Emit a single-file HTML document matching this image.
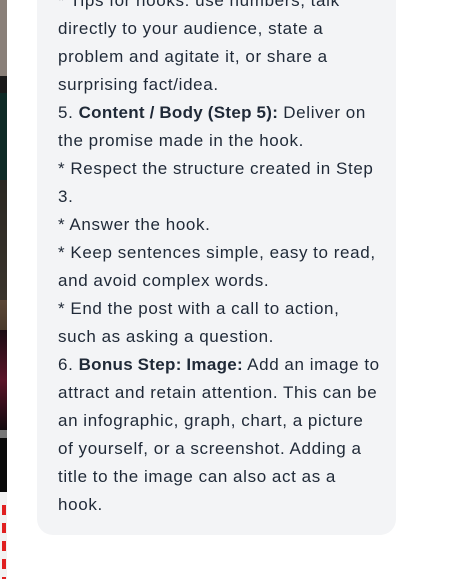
<!DOCTYPE html>
<html><head><style>
html,body{margin:0;padding:0;width:459px;height:579px;overflow:hidden;background:#fff;position:relative;font-family:"Liberation Sans",Arial,sans-serif}
.strip{position:absolute;left:0;top:0;width:7px;height:579px;background:linear-gradient(#8a8079 0,#8a8079 76px,#1a1a1a 76px,#1a1a1a 93px,#0f2a26 93px,#0f2a26 180px,#2b2823 180px,#3a342c 300px,#5a4736 300px,#4a3a2c 330px,#1a0d12 330px,#5a1428 380px,#120a0e 430px,#777 430px,#777 438px,#0a0a0a 438px,#0a0a0a 492px,#f2f2f2 492px)}
.red{position:absolute;left:2px;top:505px;width:4px;height:74px;background:repeating-linear-gradient(#e02020 0,#e02020 10px,#f2f2f2 10px,#f2f2f2 18px)}
.bubble{position:absolute;left:37px;top:-40px;width:359px;height:575px;background:#f3f4f6;border-radius:0 0 16px 16px}
.text{position:absolute;left:58px;top:-13px;width:345px;font-size:17px;letter-spacing:0.65px;word-spacing:-0.3px;line-height:28px;color:#1f2937;white-space:nowrap}
b{font-weight:bold;letter-spacing:0.3px}
</style></head><body>
<div class="strip"></div>
<div class="red"></div>
<div class="bubble"></div>
<div class="text">
* Tips for hooks: use numbers, talk<br>
directly to your audience, state a<br>
problem and agitate it, or share a<br>
surprising fact/idea.<br>
5. <b>Content / Body (Step 5):</b> Deliver on<br>
the promise made in the hook.<br>
* Respect the structure created in Step<br>
3.<br>
* Answer the hook.<br>
* Keep sentences simple, easy to read,<br>
and avoid complex words.<br>
* End the post with a call to action,<br>
such as asking a question.<br>
6. <b>Bonus Step: Image:</b> Add an image to<br>
attract and retain attention. This can be<br>
an infographic, graph, chart, a picture<br>
of yourself, or a screenshot. Adding a<br>
title to the image can also act as a<br>
hook.
</div>
</body></html>
